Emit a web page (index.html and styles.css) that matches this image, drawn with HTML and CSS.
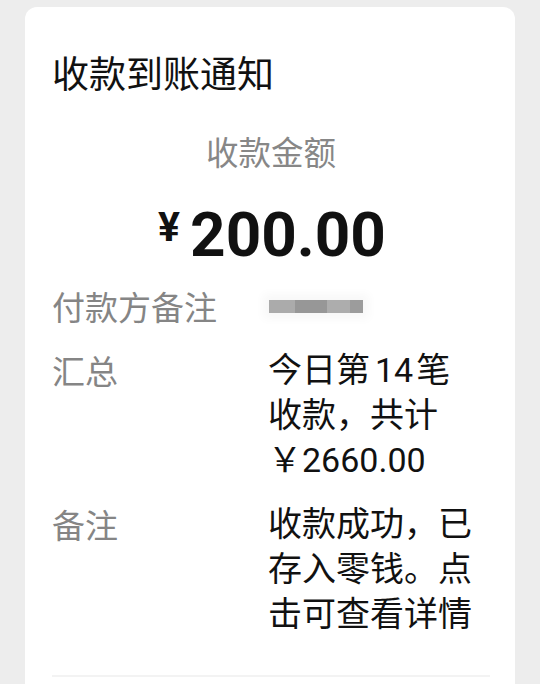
FILE: index.html
```html
<!DOCTYPE html>
<html lang="zh-CN">
<head>
    <meta charset="UTF-8">
    <meta name="viewport" content="width=device-width, initial-scale=1.0">
    <title>收款到账通知</title>
    <link rel="stylesheet" href="styles.css">
</head>
<body>

    <div class="card">
        <h2 class="title">收款到账通知</h2>

        <div class="sub">收款金额</div>
        <div class="amount"><span class="yen">¥</span>200.00</div>

        <div class="rows">
            <div class="label">付款方备注</div>
            <div class="value masked"><span class="blur"></span></div>

            <div class="label">汇总</div>
            <div class="value">今日第<span class="num">14</span>笔收款，共计￥2660.00</div>

            <div class="label">备注</div>
            <div class="value">收款成功，已存入零钱。点击可查看详情</div>
        </div>

        <div class="divider"></div>
    </div>

</body>
</html>
```

FILE: styles.css
```css
body { margin: 0; padding: 7px 25px 0; background: #ededed; font-family: Roboto, "Noto Sans CJK SC", sans-serif; color: #111; }
.card { background: #fff; border-radius: 12px 12px 0 0; padding: 42px 25px 60px 27px; }
.title { margin: 0; font-size: 37px; line-height: 46px; font-weight: 400; font-family: "Noto Sans CJK SC", sans-serif; }
.sub { margin-top: 33px; text-align: center; font-size: 32.5px; line-height: 45px; color: #878787; font-family: "Noto Sans CJK SC", sans-serif; }
.amount { margin-top: 22px; text-align: center; font-size: 62px; line-height: 80px; font-weight: 700; padding-left: 2px; }
.yen { font-size: 41px; line-height: 1; vertical-align: 15px; margin-right: 10px; }
.rows { display: grid; grid-template-columns: 216px 212px; row-gap: 19px; margin-top: 9px; font-size: 34px; line-height: 45px; }
.label { color: #858585; font-size: 33px; font-family: "Noto Sans CJK SC", sans-serif; }
.value { color: #111; }
.num { padding: 0 3px 0 5px; }
.masked { display: flex; align-items: center; padding-left: 1px; }
.blur { display: block; width: 94px; height: 13px; background: linear-gradient(90deg, #ababab 0 28%, #979797 28% 62%, #adadad 62% 86%, #9c9c9c 86%); filter: blur(0.6px); box-shadow: 0 0 10px 6px rgba(0, 0, 0, 0.03); }
.divider { margin-top: 38px; height: 2px; background: #f3f3f3; }
```
